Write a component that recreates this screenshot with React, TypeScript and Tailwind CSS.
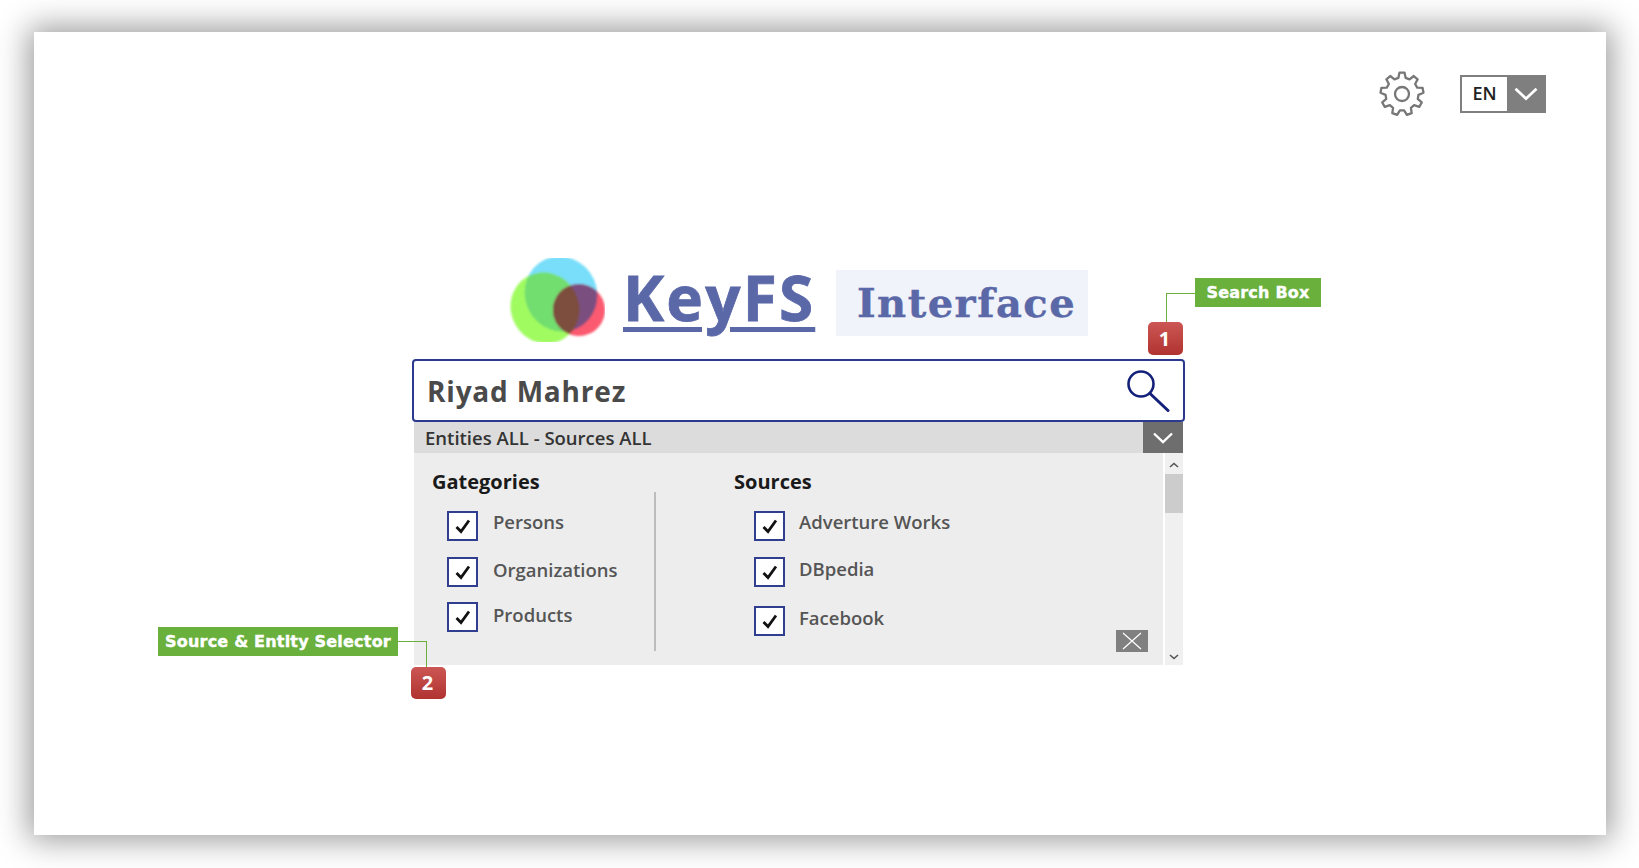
const OS = "font-['Open_Sans',sans-serif]";

function Check() {
  return (
    <span className="flex h-[30px] w-[31px] shrink-0 items-center justify-center border-[2.5px] border-[#2f3e8f] bg-white">
      <svg width="18" height="18" viewBox="0 0 18 18" fill="none">
        <path d="M2.5 10 L7 14.5 L15 3.5" stroke="#111" strokeWidth="2.8" />
      </svg>
    </span>
  );
}

function Row({ label, mt, textShift, gap }: { label: string; mt: string; textShift: string; gap: string }) {
  return (
    <div className={`flex items-start ${gap} ${mt}`}>
      <Check />
      <span className={`text-[18.5px] leading-[24px] font-semibold text-[#555555] ${textShift}`}>{label}</span>
    </div>
  );
}

function Logo() {
  const c = <ellipse cx="52" cy="36" rx="36" ry="38" transform="rotate(-25 52 36)" />;
  const g = <ellipse cx="36" cy="50" rx="36" ry="34" transform="rotate(60 36 50)" />;
  const r = <ellipse cx="70" cy="52" rx="26" ry="26" transform="rotate(30 70 52)" />;
  return (
    <svg width="96" height="84" viewBox="0 0 96 84" className="shrink-0">
      <defs>
        <clipPath id="lc">{c}</clipPath>
        <clipPath id="lg">{g}</clipPath>
        <clipPath id="lr">{r}</clipPath>
        <filter id="soft"><feGaussianBlur stdDeviation="0.8" /></filter>
      </defs>
      <g filter="url(#soft)">
        <g fill="#78defa">{c}</g>
        <g fill="#a0fb60">{g}</g>
        <g clipPath="url(#lc)"><g fill="#72de70">{g}</g></g>
        <g fill="#fb5a70">{r}</g>
        <g clipPath="url(#lc)"><g fill="#7a4f80">{r}</g></g>
        <g clipPath="url(#lg)"><g fill="#7d4d3c">{r}</g></g>
      </g>
    </svg>
  );
}

function Gear() {
  const teeth = Array.from({ length: 9 }, (_, i) => i);
  const pts: string[] = [];
  teeth.forEach((i) => {
    const a = (i * 2 * Math.PI) / 9 - Math.PI / 2;
    const step = (2 * Math.PI) / 9;
    const p = (ang: number, rad: number) => `${(24 + Math.cos(ang) * rad).toFixed(2)},${(24 + Math.sin(ang) * rad).toFixed(2)}`;
    pts.push(p(a - step * 0.32, 16.5), p(a - step * 0.17, 21.5), p(a + step * 0.17, 21.5), p(a + step * 0.32, 16.5));
  });
  return (
    <svg width="48" height="48" viewBox="0 0 48 48" fill="none" stroke="#777777" strokeWidth="2.3" strokeLinejoin="round">
      <polygon points={pts.join(" ")} />
      <circle cx="24" cy="24" r="7" />
    </svg>
  );
}

function Chevron({ w = 20, h = 12, sw = 2.4 }: { w?: number; h?: number; sw?: number }) {
  return (
    <svg width={w} height={h} viewBox="0 0 20 12" fill="none">
      <path d="M1 1.5 L10 10 L19 1.5" stroke="#fff" strokeWidth={sw} />
    </svg>
  );
}

export default function App() {
  return (
    <div className={`h-[868px] w-[1639px] overflow-hidden bg-white pl-[34px] pt-[32px] ${OS}`}>
      <div className="relative h-[803px] w-[1572px] bg-white shadow-[0_0_30px_5px_rgba(0,0,0,0.4)]">
        {/* top bar */}
        <div className="flex items-center justify-end gap-[34px] pr-[60px] pt-[38px]">
          <Gear />
          <div className="flex h-[38px] w-[86px] border-2 border-[#7f7f7f] bg-white">
            <span className="flex w-[45px] items-center justify-center pb-[1px] text-[18px] font-semibold text-[#222]">EN</span>
            <span className="flex flex-1 items-center justify-center bg-[#7f7f7f]"><Chevron w={24} h={14} /></span>
          </div>
        </div>

        {/* centre column */}
        <div className="ml-[378px] mt-[140px] w-[773px]">
          <div className="flex h-[84px] items-start pl-[97px]">
            <Logo />
            <span className="ml-[18px] mt-[-3px] w-[190px] text-[62px] leading-[84px] font-bold tracking-[2.2px] text-[#5b68a8] underline decoration-[5px] underline-offset-[6px] [-webkit-text-stroke:0.8px_#5b68a8]">
              KeyFS
            </span>
            <span className="ml-[23px] mt-[12px] flex h-[66px] w-[252px] items-center justify-center bg-[#f0f3f9] pl-[9px] font-['DejaVu_Serif',serif] text-[40px] font-bold tracking-[1.5px] text-[#5b68a8] [-webkit-text-stroke:0.4px_#5b68a8]">
              Interface
            </span>
          </div>

          <div className="mt-[17px] flex h-[63px] items-center justify-between rounded-[4px] border-[2.5px] border-[#2b3a8f] bg-white pl-[13px] pr-[13px]">
            <span className="text-[28px] font-bold tracking-[0.8px] text-[#4a4a4a]">Riyad Mahrez</span>
            <svg width="44" height="42" viewBox="0 0 44 42" fill="none" stroke="#14217a" strokeLinecap="round">
              <circle cx="15" cy="14" r="12.5" strokeWidth="2.6" />
              <path d="M24 23.5 L42 40.5" strokeWidth="3" />
            </svg>
          </div>

          <div className="mx-[2px] flex h-[31px] items-center justify-between bg-[#dcdcdc] pl-[11px]">
            <span className="pt-[1px] text-[18.5px] font-semibold text-[#333]">Entities ALL - Sources ALL</span>
            <span className="flex h-[31px] w-[40px] items-center justify-center bg-[#6e6e6e]"><Chevron /></span>
          </div>

          <div className="mx-[2px] flex h-[212px] bg-[#ededed]">
            <div className="flex min-w-0 flex-1">
              <div className="w-[240px] shrink-0 pl-[18px] pt-[15px]">
                <div className="text-[20px] leading-[27px] font-bold text-[#1a1a1a]">Gategories</div>
                <div className="pl-[15px]">
                  <Row label="Persons" mt="mt-[16px]" textShift="mt-[-1px]" gap="gap-[15px]" />
                  <Row label="Organizations" mt="mt-[16px]" textShift="mt-[1px]" gap="gap-[15px]" />
                  <Row label="Products" mt="mt-[15px]" textShift="mt-[1px]" gap="gap-[15px]" />
                </div>
              </div>
              <div className="mt-[39px] h-[159px] w-[2px] shrink-0 bg-[#bdbdbd]" />
              <div className="relative min-w-0 flex-1 pl-[78px] pt-[15px]">
                <div className="text-[20px] leading-[27px] font-bold text-[#1a1a1a]">Sources</div>
                <div className="pl-[20px]">
                  <Row label="Adverture Works" mt="mt-[16px]" textShift="mt-[-1px]" gap="gap-[14px]" />
                  <Row label="DBpedia" mt="mt-[16px]" textShift="mt-[0px]" gap="gap-[14px]" />
                  <Row label="Facebook" mt="mt-[19px]" textShift="mt-[0px]" gap="gap-[14px]" />
                </div>
                <div className="absolute bottom-[13px] right-[15px] flex h-[22px] w-[32px] items-center justify-center bg-[#808080]">
                  <svg width="20" height="18" viewBox="0 0 20 18" fill="none" stroke="#fff" strokeWidth="1.2">
                    <path d="M1 1 L19 17 M19 1 L1 17" />
                  </svg>
                </div>
              </div>
            </div>
            <div className="flex w-[20px] shrink-0 flex-col items-center justify-between border-l-2 border-white bg-[#f0f0f0] pb-[5px]">
              <div className="flex w-full flex-col items-center">
                <svg className="mt-[9px]" width="10" height="6" viewBox="0 0 10 6" fill="none" stroke="#555" strokeWidth="1.6"><path d="M1 5 L5 1.5 L9 5" /></svg>
                <div className="mt-[6px] h-[39px] w-full bg-[#cccccc]" />
              </div>
              <svg width="10" height="6" viewBox="0 0 10 6" fill="none" stroke="#555" strokeWidth="1.6"><path d="M1 1 L5 4.5 L9 1" /></svg>
            </div>
          </div>
        </div>

        {/* callout 1 */}
        <div className="absolute left-[1161px] top-[246px] flex h-[29px] w-[126px] items-center justify-center bg-[#69b03c] pt-[1px] font-['DejaVu_Sans',sans-serif] text-[16px] font-bold tracking-[0.2px] text-white [-webkit-text-stroke:0.4px_#fff]">Search Box</div>
        <div className="absolute left-[1132px] top-[261px] h-[30px] w-[29px] border-l border-t border-[#69b03c]" />
        <div className="absolute left-[1114px] top-[290px] flex h-[33px] w-[35px] items-center justify-center rounded-[5px] bg-gradient-to-b from-[#cc5654] to-[#b03330] pr-[2px] text-[20px] font-bold text-white">1</div>

        {/* callout 2 */}
        <div className="absolute left-[124px] top-[595px] flex h-[29px] w-[240px] items-center justify-center bg-[#69b03c] pt-[1px] font-['DejaVu_Sans',sans-serif] text-[16px] font-bold tracking-[0.2px] text-white [-webkit-text-stroke:0.4px_#fff]">Source &amp; Entity Selector</div>
        <div className="absolute left-[364px] top-[609px] h-[27px] w-[29px] border-r border-t border-[#69b03c]" />
        <div className="absolute left-[377px] top-[635px] flex h-[32px] w-[35px] items-center justify-center rounded-[5px] bg-gradient-to-b from-[#cc5654] to-[#b03330] pr-[2px] text-[20px] font-bold text-white">2</div>
      </div>
    </div>
  );
}
